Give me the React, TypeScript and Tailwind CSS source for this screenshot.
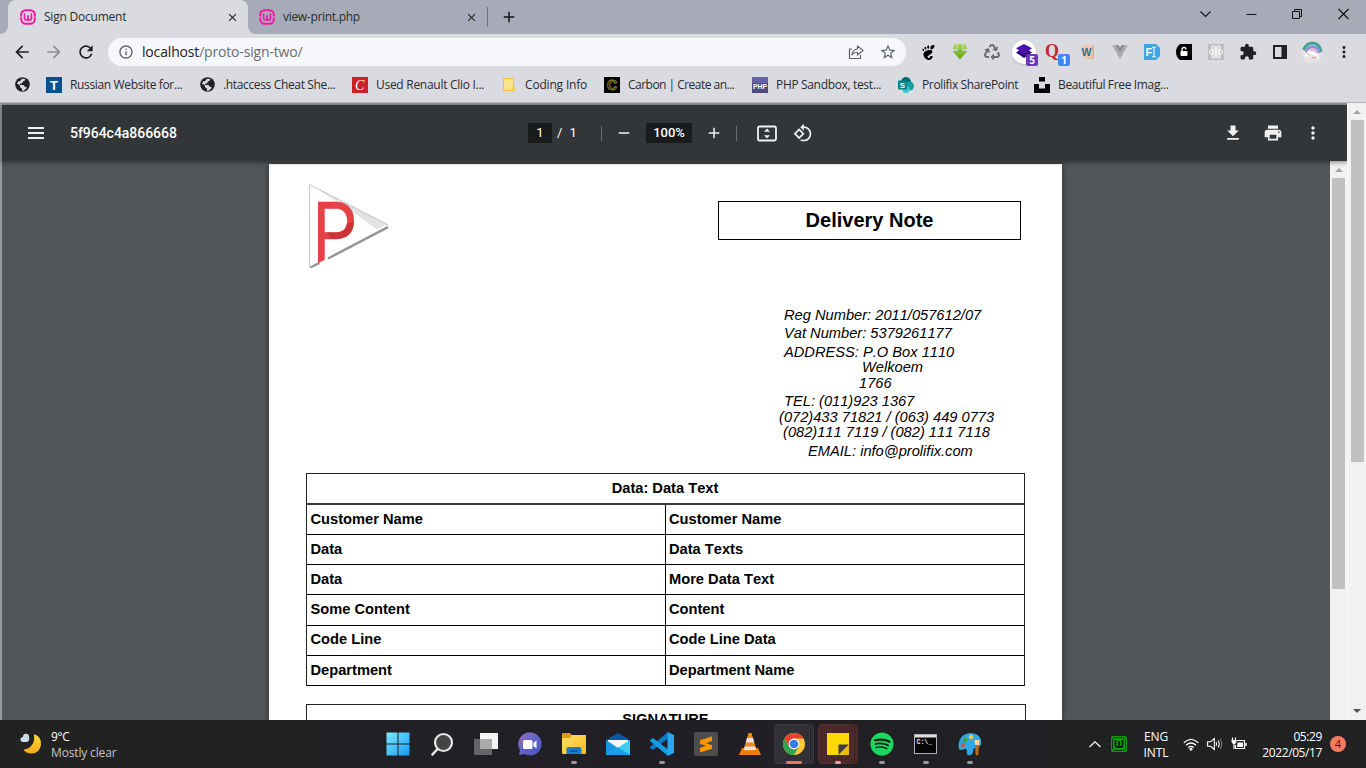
import React from "react";
import {
  MdArrowBack, MdArrowForward, MdRefresh, MdInfoOutline, MdClose, MdAdd, MdRemove, MdStarBorder,
  MdMenu, MdFileDownload, MdPrint, MdMoreVert, MdExtension, MdRotate90DegreesCcw,
} from "react-icons/md";
import { FaRecycle, FaSpotify } from "react-icons/fa";
import { SiGnome, SiReact } from "react-icons/si";

const ui = "font-['Open_Sans','Noto_Sans',sans-serif]";

function Wamp({ color = "#f615a8" }: { color?: string }) {
  return (
    <svg width="16" height="16" viewBox="0 0 16 16" fill="none" stroke={color} className="shrink-0">
      <rect x="1.2" y="1.2" width="13.6" height="13.6" rx="4.6" strokeWidth="2" />
      <path d="M4.600 4.500v5q0 1.500 1.600 1.500t1.800-1.500V6.200M8 9.400q.1 1.600 1.800 1.600t1.600-1.500v-5" strokeWidth="1.700" />
      <path d="M0 8h2.6M13.4 8H16" stroke="#dcc3d8" strokeWidth="0.8" />
    </svg>
  );
}

function Globe() {
  return (
    <svg width="15" height="15" viewBox="0 0 15 15" className="shrink-0">
      <circle cx="7.500" cy="7.500" r="7.300" fill="#202124" />
      <path d="M7 1.800l3.200.3-.4 1.600-2 .8-.6 1.700-2.200.6.3 1.200h3.200l1.200 1.800 2 .2-.6 1.700-2.700 2-1.400.2.100-2.200-2-1.500-.2-1.900-2.800-1.500 1-2.600 1.800.1z" fill="#dadbe0" />
      <path d="M9.500 3.800l2.200-.6 1 2-1.600 1.600-1.800-.4z" fill="#202124" />
    </svg>
  );
}

function TabStrip() {
  return (
    <div className="flex h-[34px] bg-[#a7abb8] pl-2">
      <div className="relative flex w-[240px] items-center rounded-t-lg bg-[#dadbe0] pl-3">
        <svg className="absolute -left-2 bottom-0" width="8" height="8"><path d="M8 0v8H0A8 8 0 0 0 8 0" fill="#dadbe0" /></svg>
        <svg className="absolute -right-2 bottom-0" width="8" height="8"><path d="M0 0v8h8A8 8 0 0 1 0 0" fill="#dadbe0" /></svg>
        <Wamp />
        <span className="ml-2 w-[172px] whitespace-nowrap text-[12px] tracking-[-0.22px] text-[#292b2f]">Sign Document</span>
        <MdClose size={13} className="ml-[9.5px] shrink-0 text-[#202124]" />
      </div>
      <div className="flex w-[239px] items-center pl-[11px]">
        <Wamp />
        <span className="ml-2 w-[172px] whitespace-nowrap text-[12px] tracking-[-0.3px] text-[#292b2f]">view-print.php</span>
        <MdClose size={13} className="ml-[9.5px] shrink-0 text-[#202124]" />
      </div>
      <div className="mt-[7px] h-5 w-px bg-[#71747d]" />
      <MdAdd size={18} className="mt-2 ml-3 text-[#18191b]" />
      <div className="flex flex-1 items-center justify-end pr-[16px] pb-[6px]">
        <svg width="150" height="12" viewBox="0 0 150 12" fill="none" stroke="#111">
          <path d="M.5 3.5l5 5 5-5" strokeWidth="1.1" />
          <path d="M46.500 6.500h10" />
          <path d="M92.500 3.500h7v7h-7zM94.500 3.500v-2h7v7h-2" />
          <path d="M138.500 1l10 10M148.500 1l-10 10" strokeWidth="1.1" />
        </svg>
      </div>
    </div>
  );
}

function Slot({ children }: { children: React.ReactNode }) {
  return <div className="flex h-8 w-8 shrink-0 items-center justify-center">{children}</div>;
}

function Extensions() {
  return (
    <div className="flex pl-[6px]">
      <Slot><SiGnome size={15} className="text-black" /></Slot>
      <Slot>
        <svg width="16" height="16" viewBox="0 0 16 16">
          <defs><linearGradient id="gr" x2="0" y2="1"><stop stopColor="#a2d64a" /><stop offset="1" stopColor="#67a313" /></linearGradient></defs>
          <path d="M5.500 0h5v7H15.500l-7.500 8.500L.5 7h5z" fill="url(#gr)" />
          <path d="M2 .5h2.500v5.500L1 5zM14 .5h-2.500v5.500L15 5z" fill="#9bd13c" />
        </svg>
      </Slot>
      <Slot><FaRecycle size={16} className="text-[#6c6d6e]" /></Slot>
      <Slot>
        <div className="relative h-6 w-6 rounded-full bg-white shadow">
          <svg width="24" height="24" viewBox="0 0 24 24">
            <path d="M12 4l8 4.200-8 5-8-5z" fill="#4a0fb5" /><path d="M4 12.500l8 5.500 8-5.500-3-1.700-5 3-5-3z" fill="#2b0673" />
            <path d="M6.500 9.500l5.500 3.500 5.500-3.500v3L12 16l-5.500-3.500z" fill="#3a0a92" />
          </svg>
          <div className="absolute top-[14px] left-[14px] flex h-3 w-3 items-center justify-center rounded-[2px] bg-[#6936bd] text-[10px] leading-none font-bold text-white">5</div>
        </div>
      </Slot>
      <Slot>
        <div className="relative h-5 w-5">
          <svg width="20" height="20" className="overflow-visible"><text x="-1" y="14.500" textLength="14" lengthAdjust="spacingAndGlyphs" fontFamily="Liberation Serif, serif" fontSize="19" fontWeight="bold" fill="#c2282d">Q</text></svg>
          <div className="absolute top-[12px] left-[12px] flex h-3 w-3 items-center justify-center rounded-[2px] bg-[#4285f4] text-[10px] leading-none font-bold text-white">1</div>
        </div>
      </Slot>
      <Slot>
        <svg width="16" height="16" viewBox="0 0 16 16">
          <path d="M2 2l10-1 1 13H3z" fill="#f3c7a3" /><path d="M12 1l2 2v10l-1 2H4l9-1z" fill="#d7a67f" />
          <text x="1.500" y="12" fontFamily="Liberation Sans, sans-serif" fontSize="10.500" fontWeight="bold" fill="#2473a2">W</text>
        </svg>
      </Slot>
      <Slot>
        <svg width="16" height="14" viewBox="0 0 16 14"><path d="M0 0h3.500L8 8l4.500-8H16L8 14z" fill="#aaabad" /><path d="M3.500 0h3L8 2.700 9.500 0h3L8 8z" fill="#8b8c8f" /></svg>
      </Slot>
      <Slot>
        <svg width="16" height="16" viewBox="0 0 16 16">
          <path d="M1 0h11l4 4v8l-4 4H1q-1 0-1-1V1q0-1 1-1" fill="#41a5e3" />
          <text x="1.500" y="12" fontFamily="Liberation Sans, sans-serif" fontSize="11" fontWeight="bold" fill="#fff">F</text>
          <path d="M8 3q2 0 2 1.500v7q0 1.500-2 1.500M12 3q-2 0-2 1.500m0 7q0 1.500 2 1.500" fill="none" stroke="#fff" />
        </svg>
      </Slot>
      <Slot>
        <svg width="16" height="16" viewBox="0 0 16 16">
          <path d="M4 0h12v16H4q-4-3-4-8t4-8" fill="#000" /><rect x="4.500" y="7" width="7" height="5" rx="1" fill="#fff" />
          <path d="M6 7V5.500a2 2 0 0 1 4 0" fill="none" stroke="#fff" strokeWidth="1.300" />
        </svg>
      </Slot>
      <Slot><div className="flex h-4 w-4 items-center justify-center bg-[#bfc0c3]"><SiReact size={14} className="text-white" strokeWidth={0.7} stroke="white" /></div></Slot>
      <Slot><MdExtension size={18} className="text-[#202124]" /></Slot>
      <Slot><svg width="14" height="14"><path d="M0 0h14v14H0z" fill="#202124" /><path d="M2 2h6.500v10H2z" fill="#dadbe0" /></svg></Slot>
      <Slot>
        <svg width="22" height="22" viewBox="0 0 22 22" fill="none">
          <circle cx="11" cy="11" r="11" fill="#e4e2e4" />
          <path d="M2.500 9Q5 2 12 2q7 1 8 9" stroke="#3fa592" strokeWidth="3" />
          <path d="M5 11q2-6 8-5 5 1 5.500 6" stroke="#8c91df" strokeWidth="3" />
          <path d="M8 11q2-3 4-2.500 3 1 3.500 4" stroke="#e5a8c9" strokeWidth="2" />
          <path d="M6 16q-1-4 3-5l5 2 3 4" stroke="#fff" strokeWidth="3" /><path d="M4 9l2 3 2 2m3 3l5-1" stroke="#d59b82" />
        </svg>
      </Slot>
      <Slot><MdMoreVert size={18} className="text-[#202124]" /></Slot>
    </div>
  );
}

function Toolbar() {
  return (
    <div className="flex h-9 items-center bg-[#dadbe0]">
      <div className="flex w-[108px] items-center gap-3 pl-3">
        <MdArrowBack size={20} className="text-[#202124]" />
        <MdArrowForward size={20} className="text-[#8b8d92]" />
        <MdRefresh size={20} className="text-[#202124]" />
      </div>
      <div className="flex h-7 w-[798px] items-center rounded-full bg-[#f6f7fa] pr-[9px] pl-[10px]">
        <MdInfoOutline size={16} className="text-[#5f6368]" />
        <span className="ml-2 flex-1 pb-px text-[14px] tracking-[-0.17px] text-[#6a6d72]"><span className="text-[#202124]">localhost</span>/proto-sign-two/</span>
        <svg width="16" height="16" viewBox="0 0 16 16" fill="none" stroke="#5f6368" strokeWidth="1.200">
          <path d="M4 5H1.500v9.500h11V11" /><path d="M9.500 5V2L15 6.500 9.500 11V8.300Q6 8 4 11q.5-5.500 5.500-6z" strokeLinejoin="round" />
        </svg>
        <MdStarBorder size={18} className="ml-[15px] text-[#5f6368]" />
      </div>
      <Extensions />
    </div>
  );
}

function Bookmark({ w, icon, label, track }: { w: string; icon: React.ReactNode; label: string; track: string }) {
  return (
    <div className={`flex shrink-0 items-center gap-2 whitespace-nowrap ${w}`}>
      <span className="flex h-4 w-4 shrink-0 items-center justify-center">{icon}</span>
      <span className={`text-[12px] text-[#292b2f] ${track}`}>{label}</span>
    </div>
  );
}

function Bookmarks() {
  return (
    <div className="flex h-8 items-center border-b border-[#b3b2b5] bg-[#dadbe0] pb-[4px] pl-[15px]">
      <div className="mr-[16px]"><Globe /></div>
      <Bookmark w="w-[153px]" track="tracking-[-0.35px]" label="Russian Website for..." icon={
        <svg width="16" height="16"><path d="M0 0h16v16H0z" fill="#06508e" /><text x="4" y="12.500" fontFamily="Liberation Sans, sans-serif" fontSize="13" fontWeight="bold" fill="#fff">T</text></svg>} />
      <Bookmark w="w-[153px]" track="tracking-[-0.35px]" label=".htaccess Cheat She..." icon={<Globe />} />
      <Bookmark w="w-[149px]" track="tracking-[-0.28px]" label="Used Renault Clio I..." icon={
        <svg width="16" height="16"><path d="M0 0h16v16H0z" fill="#c9202a" /><text x="3" y="12.500" fontFamily="Liberation Serif, serif" fontStyle="italic" fontSize="14" fill="#fff">C</text></svg>} />
      <Bookmark w="w-[103px]" track="tracking-[-0.18px]" label="Coding Info" icon={
        <svg width="16" height="16"><path d="M2.500 1.500h10v9h1v3h-11z" fill="#ffe38a" stroke="#edc444" /><path d="M11.500 10v3.500" stroke="#edc444" /></svg>} />
      <Bookmark w="w-[148px]" track="tracking-[-0.52px]" label="Carbon | Create an..." icon={
        <svg width="16" height="16"><path d="M0 0h16v16H0z" /><text x="3" y="13" fontFamily="Liberation Sans, sans-serif" fontSize="14" fontWeight="bold" fill="#151300" stroke="#9a9130" strokeWidth="0.800">C</text></svg>} />
      <Bookmark w="w-[146px]" track="tracking-[-0.34px]" label="PHP Sandbox, test..." icon={
        <svg width="16" height="16"><path d="M0 0h16v16H0z" fill="#4e4c7a" /><path d="M0 0h16v6H0z" fill="#6664a0" /><text x="1" y="12" textLength="14" lengthAdjust="spacingAndGlyphs" fontFamily="Liberation Sans, sans-serif" fontSize="7" fontWeight="bold" fill="#fff">PHP</text></svg>} />
      <Bookmark w="w-[136px]" track="tracking-[-0.37px]" label="Prolifix SharePoint" icon={
        <svg width="16" height="16"><circle cx="8" cy="5" r="5" fill="#036c70" /><circle cx="11.500" cy="9" r="4.500" fill="#1a9ba1" /><circle cx="8" cy="12.500" r="3.500" fill="#37c6d0" /><rect y="3.500" width="9" height="9" rx="1" fill="#038387" /><text x="1.800" y="11" fontFamily="Liberation Sans, sans-serif" fontSize="8" fontWeight="bold" fill="#fff">S</text></svg>} />
      <Bookmark w="w-[140px]" track="tracking-[-0.35px]" label="Beautiful Free Imag..." icon={
        <svg width="16" height="16"><path d="M5 0h6v4.500H5zM0 7h5v4.500h6V7h5v9H0z" /></svg>} />
    </div>
  );
}

function PdfToolbar() {
  return (
    <div className="relative z-10 flex h-14 shrink-0 items-center bg-[#323639] font-[Roboto,sans-serif] text-[#f1f1f1] shadow-[0_1px_4px_1px_rgba(0,0,0,0.35)]">
      <svg className="ml-[26px] shrink-0" width="16" height="12"><path d="M0 1h16M0 6h16M0 11h16" stroke="#f1f1f1" strokeWidth="2" /></svg>
      <span className="ml-[26px] w-[458px] text-[14px] font-medium tracking-[-0.03px] text-white">5f964c4a866668</span>
      <span className="flex h-5 w-6 items-center justify-center bg-[#191b1c] text-[13px] text-white">1</span>
      <span className="ml-[5px] w-[45px] text-[13px] text-white">/<span className="ml-[7px]">1</span></span>
      <span className="-ml-px h-[15px] w-px bg-[#6a6d70]" />
      <MdRemove size={18} className="ml-[13px]" />
      <span className="ml-[13px] flex h-5 w-[46px] items-center justify-center bg-[#191b1c] text-[13px] font-medium text-white">100%</span>
      <MdAdd size={18} className="ml-[13px]" />
      <span className="ml-[13px] h-[15px] w-px bg-[#6a6d70]" />
      <svg className="ml-[20px]" width="20" height="17" viewBox="0 0 20 17">
        <rect x="1" y="1.500" width="18" height="14" rx="1.500" fill="none" stroke="#f1f1f1" strokeWidth="1.800" />
        <path d="M10 3.500l3 3.300H7zM10 13.500l3-3.300H7z" fill="#f1f1f1" />
      </svg>
      <MdRotate90DegreesCcw size={20} className="ml-[16px]" />
      <div className="ml-auto flex items-center gap-5 pr-6">
        <MdFileDownload size={20} /><MdPrint size={20} /><MdMoreVert size={20} />
      </div>
    </div>
  );
}

function Logo() {
  return (
    <svg width="84" height="88" viewBox="0 0 84 88" className="overflow-visible">
      <defs>
        <clipPath id="stem"><path d="M0 0h84v56L18 77.200 10 81V0z" /></clipPath>
        <clipPath id="bowl"><path d="M18 48l8-.5 20-8.500 2.500-8 6 4v24H24z" /></clipPath>
      </defs>
      <path d="M1.500 2v83L81 44z" fill="#fff" />
      <path d="M1.500 2L80 42 69 47.500 46 31z" fill="#e3e3e3" />
      <path d="M1.500 86V2.500L80 43" fill="none" stroke="#c9c9c9" />
      <path d="M2.500 85.500l9-4.700M20 76.500l60-31.300" stroke="#969698" strokeWidth="2.500" fill="none" />
      <g clipPath="url(#stem)">
        <text transform="translate(4 81) scale(.82 1)" fontFamily="Roboto, sans-serif" fontSize="86" fill="#e54245" stroke="#e54245" strokeWidth="0.500">P</text>
      </g>
      <g clipPath="url(#bowl)">
        <text aria-hidden="true" transform="translate(4 81) scale(.82 1)" fontFamily="Roboto, sans-serif" fontSize="86" fill="#cc3538">P</text>
      </g>
    </svg>
  );
}

const details = [
  ["Reg Number: 2011/057612/07", "pl-[784px]"],
  ["Vat Number: 5379261177", "mt-[3px] pl-[784px]"],
  ["ADDRESS: P.O Box 1110", "mt-[4px] pl-[784px]"],
  ["Welkoem", "pl-[862px]"],
  ["1766", "mt-px pl-[859px]"],
  ["TEL: (011)923 1367", "mt-[3px] pl-[784px]"],
  ["(072)433 71821 / (063) 449 0773", "mt-px pl-[779px]"],
  ["(082)111 7119 / (082) 111 7118", "pl-[783px]"],
  ["EMAIL: info@prolifix.com", "mt-[4px] pl-[808px]"],
];

const rows = [
  ["Customer Name", "Customer Name", "h-[30px] *:pb-[2px]"],
  ["Data", "Data Texts", "h-[30px] *:pb-[2px]"],
  ["Data", "More Data Text", "h-[30px] *:pb-[2px]"],
  ["Some Content", "Content", "h-[31px] *:pb-[3px]"],
  ["Code Line", "Code Line Data", "h-[30px] *:pb-[4px]"],
  ["Department", "Department Name", "h-[30px] *:pb-[2px]"],
];

function Page() {
  return (
    <div className="ml-[267px] h-[557px] w-[793px] shrink-0 overflow-hidden bg-white font-['Liberation_Sans',sans-serif] text-[14.67px] text-black shadow-[0_0_6px_rgba(0,0,0,0.5)] [font-kerning:none]">
      <div className="flex h-[142px] justify-between pt-[18px] pr-[41px] pl-[39px]">
        <Logo />
        <div className="mt-[19px] flex h-[39px] w-[303px] items-center justify-center border border-black pb-[2px] text-[20px] font-bold">Delivery Note</div>
      </div>
      <div className="-ml-[269px] flex h-[167px] flex-col pt-[2px] whitespace-nowrap italic">
        {details.map(([t, c]) => <div key={t} className={`h-[15px] shrink-0 leading-[15px] ${c}`}>{t}</div>)}
      </div>
      <div className="ml-[37px] w-[719px] border border-b-0 border-[#222] font-bold">
        <div className="flex h-[31px] items-center justify-center border-b-2 border-[#3a3a3a] pr-px pb-[2px]">Data: Data Text</div>
        {rows.map(([a, b, h], i) => (
          <div key={i} className={`flex border-b border-black ${h}`}>
            <div className="flex w-[359px] items-center border-r border-black pl-[3.500px]">{a}</div>
            <div className="flex flex-1 items-center pl-[3px]">{b}</div>
          </div>
        ))}
      </div>
      <div className="mt-[18px] ml-[37px] flex h-[40px] w-[720px] justify-center border border-[#222] pt-[3px] pr-px font-bold">SIGNATURE</div>
    </div>
  );
}

function Arrow({ down, dark }: { down?: boolean; dark?: boolean }) {
  return <svg width="8" height="4" className="shrink-0"><path d={down ? "M0 0h8L4 4z" : "M0 4h8L4 0z"} fill={dark ? "#505050" : "#a3a3a3"} /></svg>;
}

function Viewer() {
  return (
    <div className="flex h-[617px] bg-[#999]">
      <div className="flex w-[1347px] flex-col pt-[2px] pl-[2px]">
        <PdfToolbar />
        <div className="flex h-[559px] bg-[#525659]">
          <div className="flex w-[1328px] pt-[3px]"><Page /></div>
          <div className="flex w-[17px] flex-col items-center bg-[#f1f1f1] pt-[7px]">
            <Arrow />
            <div className="mt-[6px] h-[411px] w-[13px] bg-[#c1c1c1]" />
          </div>
        </div>
      </div>
      <div className="relative z-20 flex w-[19px] flex-col items-center border-l border-[#fafafa] bg-[#f1f1f1] pt-[7px] pb-[7px]">
        <Arrow />
        <div className="mt-[6px] mb-auto ml-px h-[342px] w-[13px] bg-[#c1c1c1]" />
        <Arrow down dark />
      </div>
    </div>
  );
}

function App44({ children, state = "none" }: { children: React.ReactNode; state?: string }) {
  return (
    <div className="relative flex h-12 w-11 shrink-0 items-center justify-center">
      {state === "active" && <div className="absolute top-1 left-[2px] h-10 w-9 rounded-[4px] border border-[#3b3a40] bg-[#303036] shadow-[1px_0_0_#222126,4px_0_0_#34333a]" />}
      {state === "alert" && <div className="absolute top-1 left-[2px] h-10 w-9 rounded-[4px] border border-[#582e2e] bg-[#4b2829] shadow-[1px_0_0_#33201f,4px_0_0_#4b2829]" />}
      <div className="relative">{children}</div>
      {state === "dot" && <div className="absolute bottom-1 h-[3px] w-[6px] rounded-full bg-[#98979a]" />}
      {state === "active" && <div className="absolute bottom-1 h-[3px] w-4 rounded-full bg-[#f0745c]" />}
      {state === "alert" && <div className="absolute bottom-1 h-[3px] w-[6px] rounded-full bg-[#ff99a4]" />}
    </div>
  );
}

function Taskbar() {
  return (
    <div className="relative z-30 flex h-12 items-center bg-linear-to-r from-[#222222] via-[#211f26] to-[#222222] text-[12px] text-white">
      <svg className="ml-[20px]" width="24" height="24" viewBox="0 0 24 24">
        <defs><linearGradient id="moon" x2="0" y2="1"><stop stopColor="#ffe02f" /><stop offset="1" stopColor="#f5a51d" /></linearGradient></defs>
        <path d="M14 2q8 3 7 11-2 9-10 8.500-5 0-7.500-4Q9 17 12 13t2-11" fill="url(#moon)" />
        <path d="M3 10a2.500 2.500 0 0 1 0-5 3 3 0 0 1 6-.5Q10 9 7 10z" fill="#cddbe8" />
      </svg>
      <div className="ml-[7px] w-[325px] pt-[2px] leading-[16px]">
        <div className="tracking-[-0.4px]">9°C</div><div className="tracking-[-0.15px] text-[#c5c5c6]">Mostly clear</div>
      </div>
      <div className="flex">
        <App44>
          <svg width="24" height="24" viewBox="0 0 24 24"><defs><linearGradient id="win" x2="1" y2="1"><stop stopColor="#7ee9fb" /><stop offset="1" stopColor="#139af8" /></linearGradient></defs>
            <path d="M.5.500h11v11H.5zM12.500.500h11v11h-11zM.5 12.500h11v11H.5zM12.500 12.500h11v11h-11z" fill="url(#win)" /></svg>
        </App44>
        <App44><svg width="24" height="24"><circle cx="13.500" cy="10.500" r="8.500" fill="#454548" stroke="#e8e8ea" strokeWidth="2.200" /><path d="M7.500 17l-5 5.500" stroke="#e8e8ea" strokeWidth="2.600" strokeLinecap="round" /></svg></App44>
        <App44><svg width="24" height="24"><path d="M6 1h18v16H6z" fill="#f4f4f4" /><path d="M0 7h18v16H0z" fill="#656567" /><path d="M6 7h12v10H6z" fill="#aaa" /></svg></App44>
        <App44>
          <svg width="24" height="24"><defs><linearGradient id="chat" x2="1" y2="1"><stop stopColor="#a26db7" /><stop offset=".45" stopColor="#6264c8" /><stop offset="1" stopColor="#4950c4" /></linearGradient></defs>
            <path d="M12 .5A11.500 11.500 0 1 1 6.500 22L1 23l1-5A11.500 11.500 0 0 1 12 .5" fill="url(#chat)" /><rect x="5" y="8" width="9.500" height="9" rx="1.500" fill="#fff" /><path d="M15.500 11l3-2.500v8l-3-2.500z" fill="#fff" /></svg>
        </App44>
        <App44 state="dot">
          <svg width="24" height="24"><defs><linearGradient id="fold" x2="1" y2="1"><stop stopColor="#ffdf67" /><stop offset="1" stopColor="#fabb22" /></linearGradient></defs>
            <path d="M0 2q0-1 1-1h7l2 2h14v8H0z" fill="#dc9c11" /><path d="M0 6h8l2-3h13q1 0 1 1v17q0 1-1 1H1q-1 0-1-1z" fill="url(#fold)" /><path d="M4.500 22v-5q0-2 2-2h11q2 0 2 2v5z" fill="#1580cb" /><path d="M8 19h8" stroke="#0a5391" strokeWidth="1.500" /></svg>
        </App44>
        <App44><svg width="24" height="24"><path d="M0 8l12-7 12 7v4H0z" fill="#0757a5" /><path d="M2 8h20v10H2z" fill="#f4f6f8" /><path d="M0 8l12 8-11.500 7H0z" fill="#1797e0" /><path d="M24 8v15H0l12-7.500z" fill="#3ccbf4" /><path d="M12 15.500L24 23H0z" fill="#1a9ee5" /></svg></App44>
        <App44 state="dot">
          <svg width="24" height="24" viewBox="0 0 24 24"><path d="M18 0v6.500L3 18 0 16v-1z" fill="#087bc8" /><path d="M18 24v-6.500L3 6 0 8v1z" fill="#159ce3" /><path d="M17.500 0L24 3v18l-6.500 3z" fill="#29a8f1" /></svg>
        </App44>
        <App44>
          <svg width="24" height="24"><rect width="24" height="24" rx="2" fill="#4d4d4d" /><path d="M18 4.500v4.500L12 11.200l6 2v3.500L6 20.500V16l6-2.200-6-2V8.200z" fill="#ff9800" /></svg>
        </App44>
        <App44>
          <svg width="22" height="24" viewBox="0 0 22 24"><path d="M3 16h16l3 7H0z" fill="#ee7d0d" /><path d="M9.500 1h3l5 17q-6.500 3-13 0z" fill="#f58612" /><path d="M8 6h6l1.200 4.500H6.800zM5.700 14.500h10.600l.9 3.500H4.800z" fill="#e7e7e7" /></svg>
        </App44>
        <App44 state="active">
          <svg width="22" height="22" viewBox="0 0 22 22"><circle cx="11" cy="11" r="11" fill="#fcc934" /><path d="M1.470 5.500A11 11 0 0 1 20.530 5.500H11L6.240 13.750z" fill="#e94235" /><path d="M1.470 5.500A11 11 0 0 0 11 22l4.760-8.250H6.240z" fill="#34a351" /><circle cx="11" cy="11" r="5.400" fill="#fff" /><circle cx="11" cy="11" r="4.300" fill="#347de8" /></svg>
        </App44>
        <App44 state="alert"><svg width="22" height="22"><path d="M0 0h22v22H0z" fill="#fcd804" /><path d="M11.500 22V11.500H22z" fill="#3c3c3c" /><path d="M11.500 22L22 11.500V22z" fill="#f0bd04" /></svg></App44>
        <App44 state="dot"><div className="relative h-6 w-6 rounded-full bg-[#101c14]"><FaSpotify size={24} className="text-[#1ed760]" /></div></App44>
        <App44 state="dot">
          <svg width="23" height="20" className="-translate-x-px"><rect x=".5" y=".5" width="22" height="19" fill="#070707" stroke="#aeb0b3" /><path d="M1 1h21v2.500H1z" fill="#dcdee0" /><text x="2.500" y="10" fontFamily="Liberation Mono, monospace" fontWeight="bold" fontSize="6.500" fill="#eee">C:\_</text></svg>
        </App44>
        <App44 state="dot">
          <svg width="24" height="24"><path d="M12 1q9 0 11 7 1 8-6 8-2 0-2 4-1 4-5 3Q8 22 9 19q0-3-3-2-3 2-5 0-1-3 0-7Q3 2 12 1" fill="#2fa9e6" /><circle cx="7" cy="8" r="2.200" fill="#44a32c" /><circle cx="13" cy="5" r="2.200" fill="#ffcf2e" /><circle cx="4.800" cy="13" r="2.200" fill="#d0523a" /><path d="M17 13h4l-.5 9q-1.500 3-3 0z" fill="#b66a1d" /><path d="M16.500 8h5l-.5 5h-4z" fill="#f0d6a5" /></svg>
        </App44>
      </div>
      <div className="ml-auto flex items-center pr-5">
        <svg width="12" height="7" fill="none" stroke="#fff" strokeWidth="1.200"><path d="M.5 6L6 .8 11.500 6" /></svg>
        <svg className="ml-[10px]" width="16" height="16"><rect width="16" height="16" rx="2" fill="#0a9b0d" /><path d="M1.500 3.500l2-2h9l2 2v9l-2 2h-9l-2-2z" fill="none" stroke="#04370a" /><path d="M4.500 4v5.500q0 1.500 1.500 1.500h4q1.500 0 1.500-1.500V4M8 5v6" fill="none" stroke="#051f07" strokeWidth="1.800" /></svg>
        <div className="ml-[13px] w-[42px] pt-[2px] pr-[10px] text-center leading-[16px] tracking-[-0.1px]">ENG<br />INTL</div>
        <svg className="ml-[1px]" width="16" height="13" fill="none" stroke="#fff" strokeWidth="1.200"><path d="M.8 4.800Q8-2 15.200 4.800M3 7.300q5-4.600 10 0M5.200 9.600q2.800-2.600 5.600 0" /><circle cx="8" cy="11" r="1" fill="#fff" /></svg>
        <svg className="ml-[8px]" width="16" height="14" fill="none" stroke="#fff" strokeWidth="1.100"><path d="M.6 4.800h3L7.300 1.500v11L3.600 9.300h-3zM9 5q1.300 2 0 4M11 3.500q2.500 3.500 0 7" /><path d="M13 2q3.500 5 0 10" stroke="#777" /></svg>
        <svg className="ml-[8px]" width="16" height="14" fill="none" stroke="#fff" strokeWidth="1.200"><path d="M6 3.500h7.500v8h-9V8" /><path d="M6.500 5.500h5.500V10H6z" fill="#fff" stroke="none" /><path d="M15 6v3" strokeWidth="1.500" /><path d="M1.500.500v3M4.500.500v3M3 6v6" /><path d="M.5 3h5v2l-1.500 2H2L.5 5z" fill="#fff" stroke="none" /></svg>
        <div className="ml-[8px] w-[67px] pt-px text-right leading-[16px] tracking-[-0.4px]">05:29<br />2022/05/17</div>
        <div className="ml-[8px] flex h-4 w-4 items-center justify-center rounded-full bg-[#f67c61] text-[11px] text-[#3a1e19]">4</div>
      </div>
    </div>
  );
}

export default function App() {
  return (
    <div className={`h-[768px] w-[1366px] overflow-hidden bg-[#dadbe0] ${ui}`}>
      <TabStrip />
      <Toolbar />
      <div className="h-px" />
      <Bookmarks />
      <div className="h-[617px] overflow-hidden"><Viewer /></div>
      <Taskbar />
    </div>
  );
}
